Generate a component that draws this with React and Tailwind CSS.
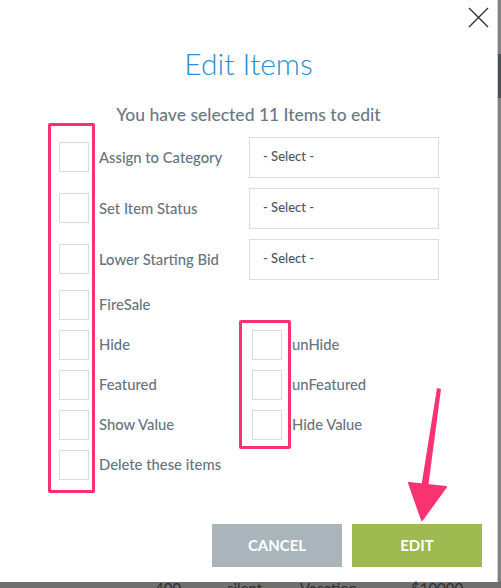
import React from 'react'

const Box = () => <div className="w-[30px] h-[30px] border border-[#d6dcdf] bg-white shrink-0" />

const CheckRow = ({ label }) => (
  <div className="flex items-center">
    <Box />
    <span className="ml-[10px] text-[14.8px] font-medium text-[#65747f] whitespace-nowrap">{label}</span>
  </div>
)

const Select = () => (
  <div className="w-[190px] h-[41px] border border-[#d8dee1] flex items-center pl-[13px] text-[13px] font-medium text-[#4b565e]">
    - Select -
  </div>
)

export default function App() {
  const selectRows = ['Assign to Category', 'Set Item Status', 'Lower Starting Bid']
  const pairRows = [
    ['FireSale', null],
    ['Hide', 'unHide'],
    ['Featured', 'unFeatured'],
    ['Show Value', 'Hide Value'],
    ['Delete these items', null],
  ]

  return (
    <div className="w-[501px] h-[588px] bg-[#6f6f6f] overflow-hidden relative flex flex-col" style={{ fontFamily: 'Lato, "Open Sans", sans-serif' }}>
      <div className="flex h-[582px] shrink-0">
        {/* Modal */}
        <div className="w-[498px] bg-white border-r border-[#d0d0d0] relative">
          {/* close */}
          <svg className="absolute left-[468px] top-[7px]" width="21" height="21" viewBox="0 0 21 21">
            <path d="M1 1 L20 20 M20 1 L1 20" stroke="#333" strokeWidth="1.4" fill="none" />
          </svg>

          <h1 className="text-center text-[30px] font-light text-[#2a8fd2] leading-none pt-[48px]">Edit Items</h1>
          <p className="text-center text-[17.5px] text-[#6a7984] leading-none mt-[28px] font-medium">You have selected 11 Items to edit</p>

          <div className="pl-[59px] mt-[13px] flex flex-col gap-[10px]">
            {selectRows.map((l) => (
              <div key={l} className="flex items-center h-[41px]">
                <div className="w-[190px]">
                  <CheckRow label={l} />
                </div>
                <Select />
              </div>
            ))}
            {pairRows.map(([a, b]) => (
              <div key={a} className="flex items-center h-[30px]">
                <div className="w-[193px]">
                  <CheckRow label={a} />
                </div>
                {b && <CheckRow label={b} />}
              </div>
            ))}
          </div>

          <div className="flex justify-end gap-[10px] pr-[15px] mt-[44px]">
            <button className="w-[130px] h-[43px] bg-[#a9b4bb] text-white text-[15px] font-bold">CANCEL</button>
            <button className="w-[130px] h-[43px] bg-[#9db950] text-white text-[15px] font-bold">EDIT</button>
          </div>

          {/* annotations */}
          <div className="absolute left-[48px] top-[123px] w-[47px] h-[370px] border-[3px] border-[#fb3271] rounded-[2px]" />
          <div className="absolute left-[239px] top-[320px] w-[52px] h-[129px] border-[3px] border-[#fb3271] rounded-[2px]" />
          <svg className="absolute left-0 top-0 pointer-events-none" width="498" height="582">
            <polygon points="437,388 441,389 428,488 421,488" fill="#fb3271" />
            <polygon points="409,483 446,487 422,520" fill="#fb3271" strokeLinejoin="round" stroke="#fb3271" strokeWidth="2" />
          </svg>
        </div>
        {/* scrollbar strip */}
        <div className="flex-1 bg-[#808080] relative">
          <div className="absolute left-0 right-0 top-[54px] h-[44px] bg-[#4a4f52]" />
        </div>
      </div>
      <div className="relative flex-1 text-[15px] text-[#2e2e2e] leading-none">
        <span className="absolute left-[155px] top-[-1px]">400</span>
        <span className="absolute left-[227px] top-[-1px]">silent</span>
        <span className="absolute left-[300px] top-[-1px]">Vacation</span>
        <span className="absolute left-[411px] top-[-1px]">$10000</span>
      </div>
    </div>
  )
}
